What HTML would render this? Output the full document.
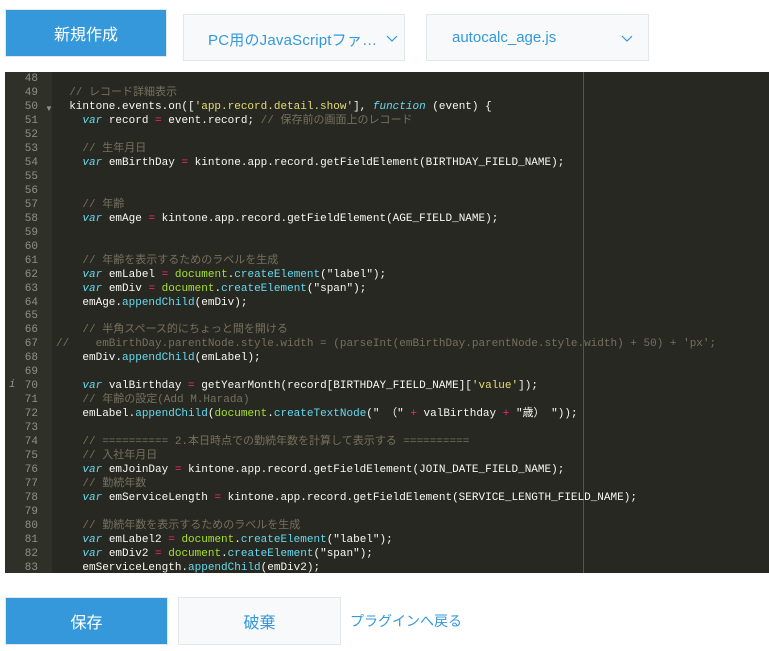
<!DOCTYPE html>
<html><head><meta charset="utf-8"><style>
*{margin:0;padding:0;box-sizing:border-box}
body{width:769px;height:651px;background:#fff;position:relative;overflow:hidden;font-family:"Liberation Sans","Noto Sans CJK JP",sans-serif}
.btn{position:absolute;display:flex;align-items:center;justify-content:center;font-size:16px}
.blue{background:#3498db;color:#fff;border:1px solid #e3e7e8}
.gray{background:#f7f9fa;border:1px solid #e3e7e8;color:#3498db}
.dd{position:absolute;background:#f7f9fa;border:1px solid #e3e7e8;color:#3498db;font-size:15px}
.dd span{position:absolute;top:14px}
.dd svg{position:absolute;top:20px}
#ed{position:absolute;left:5px;top:72px;width:764px;height:501px;background:#272822;overflow:hidden}
#gut{position:absolute;left:0;top:0;width:47px;height:100%;background:#2f3129}
#pm{position:absolute;left:578px;top:0;width:1px;height:100%;background:#555651}
.ln{position:absolute;left:0;width:47px;height:14px;color:#8f908a;font:11px/14px "Liberation Mono",monospace;text-align:right;padding-right:14px}
.cd{position:absolute;left:51px;height:14px;white-space:pre;color:#f8f8f2;font:11px/14px "Liberation Mono","Noto Sans CJK JP",monospace}
.k{color:#66d9ef;font-style:italic}.s{color:#e6db74}.o{color:#f92672}.c{color:#75715e}.f{color:#66d9ef}.g{color:#a6e22e}
</style></head><body>
<div class="btn blue" style="left:5px;top:9px;width:162px;height:48px">新規作成</div>
<div class="dd" style="left:183px;top:14px;width:222px;height:47px"><span style="left:24px;letter-spacing:0.2px">PC用のJavaScriptファ…</span><svg style="left:202px" width="12" height="8"><path d="M1 1L6 6L11 1" fill="none" stroke="#3498db" stroke-width="1.2"/></svg></div>
<div class="dd" style="left:426px;top:14px;width:223px;height:47px"><span style="left:25px">autocalc_age.js</span><svg style="left:194px" width="12" height="8"><path d="M1 1L6 6L11 1" fill="none" stroke="#3498db" stroke-width="1.2"/></svg></div>
<div id="ed"><div id="gut"></div><div id="pm"></div>
<div id="lines"></div>
</div>
<div class="btn blue" style="left:5px;top:597px;width:163px;height:48px">保存</div>
<div class="btn gray" style="left:178px;top:597px;width:163px;height:48px">破棄</div>
<div style="position:absolute;left:350px;top:611px;font-size:14px;color:#3498db">プラグインへ戻る</div>
<script>
var L=[
'',
'  <span class="c">// レコード詳細表示</span>',
'  kintone.events.on([<span class="s">\'app.record.detail.show\'</span>], <span class="k">function</span> (event) {',
'    <span class="k">var</span> record <span class="o">=</span> event.record; <span class="c">// 保存前の画面上のレコード</span>',
'',
'    <span class="c">// 生年月日</span>',
'    <span class="k">var</span> emBirthDay <span class="o">=</span> kintone.app.record.getFieldElement(BIRTHDAY_FIELD_NAME);',
'','',
'    <span class="c">// 年齢</span>',
'    <span class="k">var</span> emAge <span class="o">=</span> kintone.app.record.getFieldElement(AGE_FIELD_NAME);',
'','',
'    <span class="c">// 年齢を表示するためのラベルを生成</span>',
'    <span class="k">var</span> emLabel <span class="o">=</span> <span class="g">document</span>.<span class="f">createElement</span>("label");',
'    <span class="k">var</span> emDiv <span class="o">=</span> <span class="g">document</span>.<span class="f">createElement</span>("span");',
'    emAge.<span class="f">appendChild</span>(emDiv);',
'',
'    <span class="c">// 半角スペース的にちょっと間を開ける</span>',
'<span class="c">//    emBirthDay.parentNode.style.width = (parseInt(emBirthDay.parentNode.style.width) + 50) + \'px\';</span>',
'    emDiv.<span class="f">appendChild</span>(emLabel);',
'',
'    <span class="k">var</span> valBirthday <span class="o">=</span> getYearMonth(record[BIRTHDAY_FIELD_NAME][<span class="s">\'value\'</span>]);',
'    <span class="c">// 年齢の設定(Add M.Harada)</span>',
'    emLabel.<span class="f">appendChild</span>(<span class="g">document</span>.<span class="f">createTextNode</span>(" （" <span class="o">+</span> valBirthday <span class="o">+</span> "歳） "));',
'',
'    <span class="c">// ========== 2.本日時点での勤続年数を計算して表示する ==========</span>',
'    <span class="c">// 入社年月日</span>',
'    <span class="k">var</span> emJoinDay <span class="o">=</span> kintone.app.record.getFieldElement(JOIN_DATE_FIELD_NAME);',
'    <span class="c">// 勤続年数</span>',
'    <span class="k">var</span> emServiceLength <span class="o">=</span> kintone.app.record.getFieldElement(SERVICE_LENGTH_FIELD_NAME);',
'',
'    <span class="c">// 勤続年数を表示するためのラベルを生成</span>',
'    <span class="k">var</span> emLabel2 <span class="o">=</span> <span class="g">document</span>.<span class="f">createElement</span>("label");',
'    <span class="k">var</span> emDiv2 <span class="o">=</span> <span class="g">document</span>.<span class="f">createElement</span>("span");',
'    emServiceLength.<span class="f">appendChild</span>(emDiv2);'
];
var h='';
for(var i=0;i<L.length;i++){var t=0+i*13.97;
h+='<div class="ln" style="top:'+t+'px">'+(48+i)+'</div><div class="cd" style="top:'+t+'px">'+L[i]+'</div>';}
h+='<div style="position:absolute;left:40px;top:32px;color:#8f908a;font-size:8px">▼</div>';
h+='<div style="position:absolute;left:4px;top:305px;color:#8f908a;font:italic 11px/14px monospace">i</div>';
document.getElementById('lines').innerHTML=h;
</script>
</body></html>
